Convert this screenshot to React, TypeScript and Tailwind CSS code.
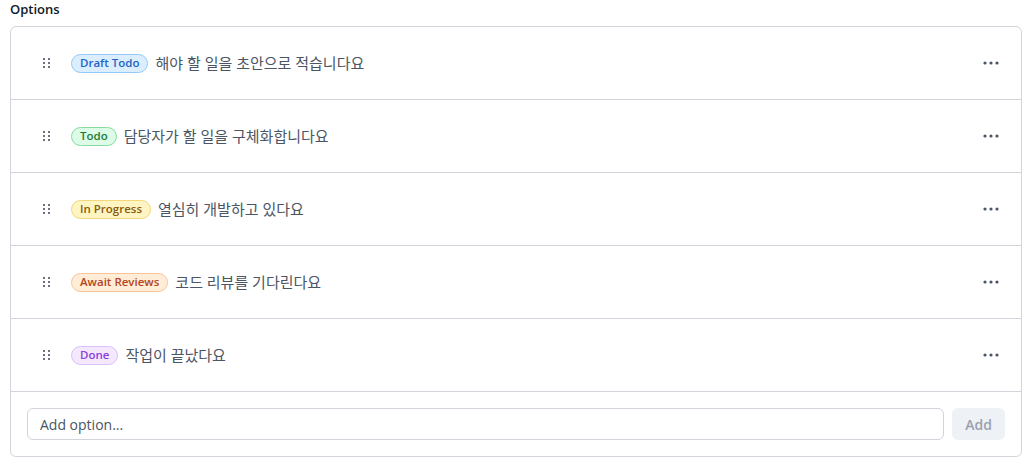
import { useState } from "react";

const options = [
  { label: "Draft Todo", desc: "해야 할 일을 초안으로 적습니다요", cls: "bg-[#dbeefe] border-[#93c9f8] text-[#1f63c7]" },
  { label: "Todo", desc: "담당자가 할 일을 구체화합니다요", cls: "bg-[#dcfce7] border-[#86dca0] text-[#1d7a3a]" },
  { label: "In Progress", desc: "열심히 개발하고 있다요", cls: "bg-[#fef5c3] border-[#f3d77a] text-[#8a5a0b]" },
  { label: "Await Reviews", desc: "코드 리뷰를 기다린다요", cls: "bg-[#ffedd8] border-[#fbc39a] text-[#b4441a]" },
  { label: "Done", desc: "작업이 끝났다요", cls: "bg-[#f4e8ff] border-[#dcc0fb] text-[#8a3fdc]" },
];

function Grip() {
  return (
    <svg width="8" height="10" viewBox="0 0 8 10" className="text-gray-500">
      {[0, 4, 8].map((y) =>
        [1, 6].map((x) => <rect key={`${x}-${y}`} x={x} y={y} width="2" height="2" fill="currentColor" />)
      )}
    </svg>
  );
}

function Dots() {
  return (
    <svg width="16" height="4" viewBox="0 0 16 4" className="text-gray-600">
      <circle cx="2" cy="2" r="1.6" fill="currentColor" />
      <circle cx="8" cy="2" r="1.6" fill="currentColor" />
      <circle cx="14" cy="2" r="1.6" fill="currentColor" />
    </svg>
  );
}

export default function App() {
  const [value, setValue] = useState("");
  return (
    <div className="bg-white w-[1029px] h-[471px] px-[10px] pt-[1px]" style={{ fontFamily: "'Open Sans', 'Noto Sans CJK KR', sans-serif" }}>
      <div className="text-[13px] font-semibold text-gray-900 leading-[16px] h-[25px]">Options</div>
      <div className="border border-[#d1d5db] rounded-md w-[1012px]">
        {options.map((o) => (
          <div key={o.label} className="h-[73px] border-b border-[#d1d5db] flex items-center pl-[31px] pr-[22px]">
            <Grip />
            <span className={`ml-[21px] inline-flex items-center h-[19px] px-[8px] rounded-full border text-[11.5px] font-semibold ${o.cls}`}>{o.label}</span>
            <span className="ml-[7px] text-[15px] text-[#4b5563]">{o.desc}</span>
            <div className="ml-auto"><Dots /></div>
          </div>
        ))}
        <div className="flex items-center gap-[8px] px-[16px] pt-[16px] pb-[16px]">
          <input
            value={value}
            onChange={(e) => setValue(e.target.value)}
            placeholder="Add option..."
            className="flex-1 h-[32px] border border-[#d1d5db] rounded-md px-3 text-[14px] text-gray-700 placeholder:text-gray-600 outline-none"
          />
          <button type="button" className="h-[32px] w-[53px] rounded-md bg-[#eef1f5] text-[14px] font-semibold text-gray-400">Add</button>
        </div>
      </div>
    </div>
  );
}
